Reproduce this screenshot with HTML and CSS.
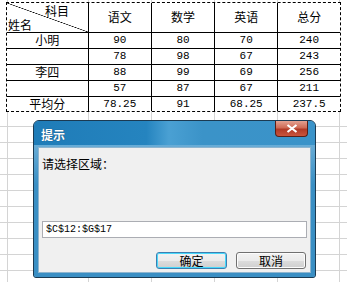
FILE: index.html
```html
<!DOCTYPE html>
<html lang="zh-CN">

<head>
    <meta charset="UTF-8">
    <title>提示</title>
    <link rel="stylesheet" href="styles.css">
</head>

<body>
    <div class="sheet">
        <table class="scores">
            <colgroup>
                <col class="c-name">
                <col class="c-val">
                <col class="c-val">
                <col class="c-val">
                <col class="c-total">
            </colgroup>
            <tr class="head">
                <td class="corner">
                    <span class="subject">科目</span>
                    <span class="person">姓名</span>
                </td>
                <td>语文</td>
                <td>数学</td>
                <td>英语</td>
                <td>总分</td>
            </tr>
            <tr>
                <td>小明</td>
                <td class="num">90</td>
                <td class="num">80</td>
                <td class="num">70</td>
                <td class="num">240</td>
            </tr>
            <tr>
                <td></td>
                <td class="num">78</td>
                <td class="num">98</td>
                <td class="num">67</td>
                <td class="num">243</td>
            </tr>
            <tr>
                <td>李四</td>
                <td class="num">88</td>
                <td class="num">99</td>
                <td class="num">69</td>
                <td class="num">256</td>
            </tr>
            <tr>
                <td></td>
                <td class="num">57</td>
                <td class="num">87</td>
                <td class="num">67</td>
                <td class="num">211</td>
            </tr>
            <tr class="avg">
                <td>平均分</td>
                <td class="num">78.25</td>
                <td class="num">91</td>
                <td class="num">68.25</td>
                <td class="num">237.5</td>
            </tr>
        </table>
    </div>

    <!-- 选择区域对话框 -->
    <div class="dialog">
        <div class="titlebar">
            <span class="title">提示</span>
            <button class="close" type="button">
                <svg width="12" height="9" viewBox="0 0 12 9">
                    <path d="M1.5 1 L10.5 8 M10.5 1 L1.5 8" stroke="#fff" stroke-width="2.2" fill="none"/>
                </svg>
            </button>
        </div>
        <div class="frame">
            <div class="content">
                <div class="label">请选择区域：</div>
                <div class="field">$C$12:$G$17</div>
                <div class="buttons">
                    <button class="btn default" type="button">确定</button>
                    <button class="btn" type="button">取消</button>
                </div>
            </div>
        </div>
    </div>
</body>

</html>
```

FILE: styles.css
```css
* {
    padding: 0px;
    margin: 0px;
    box-sizing: border-box;
}

body {
    width: 347px;
    height: 282px;
    overflow: hidden;
    background-color: #fff;
    font-family: "Noto Sans CJK SC", sans-serif;
    font-size: 12px;
    color: #000;
}

/* spreadsheet grid behind everything */
.sheet {
    position: relative;
    width: 347px;
    height: 282px;
    padding: 3px 0 0 7px;
    background:
        linear-gradient(#d4d4d4, #d4d4d4) 7px 0 / 1px 100% no-repeat,
        linear-gradient(#d4d4d4, #d4d4d4) 88px 0 / 1px 100% no-repeat,
        linear-gradient(#d4d4d4, #d4d4d4) 151px 0 / 1px 100% no-repeat,
        linear-gradient(#d4d4d4, #d4d4d4) 214px 0 / 1px 100% no-repeat,
        linear-gradient(#d4d4d4, #d4d4d4) 277px 0 / 1px 100% no-repeat,
        linear-gradient(#d4d4d4, #d4d4d4) 339px 0 / 1px 100% no-repeat,
        repeating-linear-gradient(to bottom, transparent 0 15px, #d4d4d4 15px 16px) 0 111px / 100% 100% no-repeat;
}

.scores {
    border-collapse: collapse;
    table-layout: fixed;
    width: 333px;
    background: #fff;
    outline: 1px dashed #000;
}

.c-name { width: 81px; }
.c-val { width: 63px; }
.c-total { width: 62px; }

.scores td {
    border: 1px solid #000;
    height: 16px;
    padding: 0;
    text-align: center;
    vertical-align: middle;
    line-height: 14px;
    white-space: nowrap;
}

.scores .head td {
    height: 29px;
    border-top: none;
}

.scores tr td:first-child { border-left: none; }
.scores tr td:last-child { border-right: none; }
.scores .avg td { border-bottom: none; height: 14px; }

.scores td.num {
    font-family: "Liberation Mono", monospace;
    font-size: 11px;
}

.scores td.corner {
    position: relative;
    background: linear-gradient(to top right, transparent calc(50% - 0.6px), #000 50%, transparent calc(50% + 0.6px));
}

.subject {
    position: absolute;
    top: 1px;
    left: 38px;
    line-height: 13px;
}

.person {
    position: absolute;
    bottom: 1px;
    left: 1px;
    line-height: 13px;
}

/* dialog */
.dialog {
    position: absolute;
    left: 33px;
    top: 120px;
    width: 283px;
    height: 158px;
    display: flex;
    flex-direction: column;
    border: 1px solid #1b3a52;
    border-radius: 6px 6px 3px 3px;
    background: #3a8fc4;
    box-shadow: inset 0 0 0 1px #7fb8dc;
    overflow: hidden;
}

.titlebar {
    position: relative;
    height: 24px;
    flex: none;
    padding-left: 7px;
    display: flex;
    align-items: center;
    background: linear-gradient(to right, #1f7cb8 0%, #2584bf 40%, #4aa0d3 48%, #3b93c8 60%, #3a93c9 100%);
}

.title {
    color: #fff;
    font-weight: bold;
    font-size: 12px;
    padding-top: 3px;
    text-shadow: 0 0 1px #0b3d63;
}

.close {
    position: absolute;
    top: 0;
    right: 7px;
    width: 33px;
    height: 16px;
    border: 1px solid #5a1f17;
    border-top: none;
    border-radius: 0 0 4px 4px;
    background: linear-gradient(to bottom, #e4a191 0%, #cf6a55 45%, #b13a26 55%, #c9543d 100%);
    display: flex;
    align-items: center;
    justify-content: center;
}

.frame {
    flex: 1;
    padding: 2px 4px 4px 4px;
    background: linear-gradient(to bottom, #68acd6, #3a8fc4 30%);
}

.content {
    height: 100%;
    display: flex;
    flex-direction: column;
    padding: 9px 3px 3px 3px;
    background: #f0f0f0;
    border: 1px solid #8fb5cf;
}

.label {
    line-height: 14px;
    flex: 1;
}

.field {
    height: 17px;
    margin-bottom: 14px;
    padding-left: 3px;
    line-height: 15px;
    background: #fff;
    border: 1px solid #abadb3;
    font-family: "Liberation Mono", monospace;
    font-size: 10px;
}

.buttons {
    display: flex;
    justify-content: flex-end;
    gap: 9px;
    padding-right: 1px;
}

.btn {
    width: 70px;
    height: 17px;
    font-family: "Noto Sans CJK SC", sans-serif;
    font-size: 12px;
    line-height: 14px;
    color: #000;
    border: 1px solid #707070;
    border-radius: 3px;
    background: linear-gradient(to bottom, #f2f2f2 0%, #ebebeb 50%, #dddddd 51%, #cfcfcf 100%);
    box-shadow: inset 0 0 0 1px #fcfcfc;
}

.btn.default {
    width: 71px;
    border-color: #3c7fb1;
    box-shadow: inset 0 0 0 1px #48d8fb;
}
```
